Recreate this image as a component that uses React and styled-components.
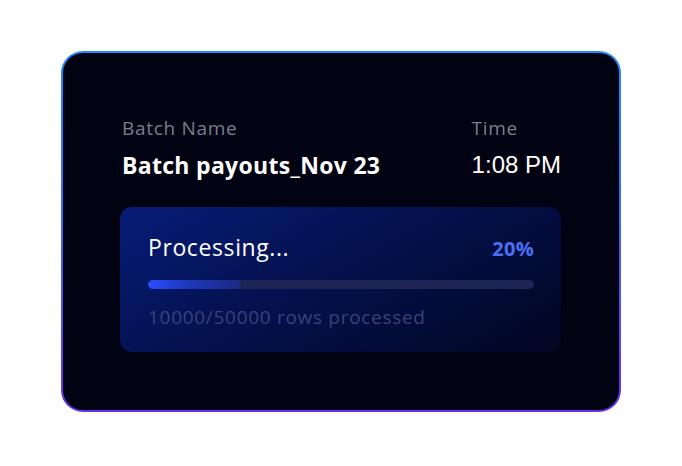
import React from 'react'
import styled, {createGlobalStyle} from 'styled-components';

const batch = {
  name: 'Batch payouts_Nov 23',
  time: '1:08 PM',
  done: 10000,
  total: 50000
};

const GlobalStyle = createGlobalStyle`
  html, body {
    margin: 0;
    background: #ffffff;
  }

  body {
    font-family: "Open Sans", Lato, sans-serif;
  }
`;

export default function App() {
  const percent = Math.round(batch.done / batch.total * 100);

  return (
    <Page>
      <GlobalStyle/>
      <Frame>
        <Card>
          <Header>
            <Field>
              <Label>Batch Name</Label>
              <Value bold>{batch.name}</Value>
            </Field>
            <Field>
              <Label>Time</Label>
              <Value arial>{batch.time}</Value>
            </Field>
          </Header>
          <Panel>
            <StatusRow>
              <Status>Processing...</Status>
              <Percent>{percent}%</Percent>
            </StatusRow>
            <Track>
              <Fill style={{width: `${percent * 1.2}%`}}/>
            </Track>
            <Rows>{batch.done}/{batch.total} rows processed</Rows>
          </Panel>
        </Card>
      </Frame>
    </Page>
  );
}

const Page = styled.div`
  height: 463px;
  display: flex;
  align-items: center;
  justify-content: center;
`;

const Frame = styled.div`
  width: 560px;
  height: 361px;
  box-sizing: border-box;
  padding: 2px;
  border-radius: 22px;
  background: linear-gradient(180deg, #1d8bff 0%, #3f63f2 50%, #6a2fe6 100%);
`;

const Card = styled.div`
  height: 100%;
  box-sizing: border-box;
  border-radius: 20px;
  background: #020312;
  padding: 64px 58px 0 57px;
`;

const Header = styled.div`
  display: flex;
  justify-content: space-between;
  padding-left: 2px;
`;

const Field = styled.div`
  display: flex;
  flex-direction: column;
  gap: 12px;
`;

const Label = styled.div`
  font-size: 19px;
  line-height: 22px;
  letter-spacing: 0.7px;
  color: #7b7e8c;
`;

const Value = styled.div`
  font-size: ${p => p.arial ? 24 : 23}px;
  line-height: 28px;
  color: #ffffff;
  font-weight: ${p => p.bold ? 700 : 400};
  letter-spacing: ${p => p.bold ? 0.3 : 0}px;
  font-family: ${p => p.arial ? '"Liberation Sans", Arial, sans-serif' : 'inherit'};
`;

const Panel = styled.div`
  margin-top: 28px;
  height: 145px;
  box-sizing: border-box;
  border-radius: 12px;
  padding: 25px 27px 0 28px;
  background: linear-gradient(150deg, #071c78 0%, #04104a 50%, #020622 100%);
`;

const StatusRow = styled.div`
  display: flex;
  justify-content: space-between;
  align-items: baseline;
`;

const Status = styled.div`
  font-size: 23px;
  line-height: 30px;
  letter-spacing: 0.6px;
  color: #ffffff;
`;

const Percent = styled.div`
  font-size: 20px;
  font-weight: 700;
  letter-spacing: 0.3px;
  color: #4b6ff5;
`;

const Track = styled.div`
  margin-top: 18px;
  height: 9px;
  border-radius: 5px;
  background: #1e2555;
  overflow: hidden;
`;

const Fill = styled.div`
  height: 100%;
  border-radius: 5px;
  background: linear-gradient(90deg, #2a4cff 0%, #1f38c0 40%, #1b2a80 100%);
`;

const Rows = styled.div`
  margin-top: 16px;
  font-size: 19px;
  line-height: 24px;
  letter-spacing: 0.7px;
  color: #38427a;
`;
